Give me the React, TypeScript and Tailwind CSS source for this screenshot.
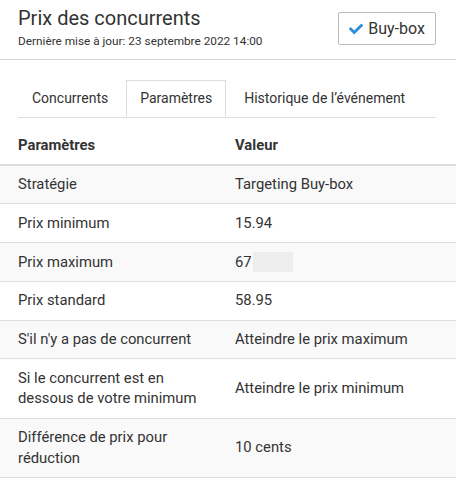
import React from 'react';
import { FaCheck } from 'react-icons/fa';

const rows: { label: string; value: string; masked?: boolean }[] = [
  { label: 'Stratégie', value: 'Targeting Buy-box' },
  { label: 'Prix minimum', value: '15.94' },
  { label: 'Prix maximum', value: '67', masked: true },
  { label: 'Prix standard', value: '58.95' },
  { label: "S'il n'y a pas de concurrent", value: 'Atteindre le prix maximum' },
  { label: 'Si le concurrent est en dessous de votre minimum', value: 'Atteindre le prix minimum' },
  { label: 'Différence de prix pour réduction', value: '10 cents' },
];

const tabs = ['Concurrents', 'Paramètres', 'Historique de l’événement'];

export default function App() {
  return (
    <div className="w-[456px] h-[479px] overflow-hidden bg-white text-[#333] font-['Roboto',sans-serif]">
      {/* header */}
      <div className="flex items-start justify-between pl-[18px] pr-[20px] pt-[6px] pb-[10px] border-b border-[#d6d6d6]">
        <div>
          <h1 className="text-[20px] leading-[24px] text-[#333]">Prix des concurrents</h1>
          <p className="mt-[3px] text-[11.8px] leading-[16px] text-[#333]">
            Dernière mise à jour: 23 septembre 2022 14:00
          </p>
        </div>
        <button className="mt-[6px] h-[33px] w-[98px] flex items-center justify-center gap-[5px] border border-[#bbb] rounded-[2px] bg-white text-[16px] text-[#333]">
          <FaCheck className="w-[14px] h-[14px] text-[#2b8fe0]" />
          Buy-box
        </button>
      </div>

      {/* tabs */}
      <div className="pl-[18px] pr-[20px] pt-[20px]">
        <div className="flex gap-[4px] border-b border-[#ddd]">
          {tabs.map((t) => (
            <div
              key={t}
              className={
                t === 'Paramètres'
                  ? 'px-[13px] h-[37px] flex items-center text-[14px] border border-[#ddd] border-b-white -mb-px bg-white'
                  : 'px-[13px] h-[37px] flex items-center text-[14px] border border-transparent'
              }
            >
              {t}
            </div>
          ))}
        </div>
      </div>

      {/* table */}
      <div className="mt-[8px] text-[14.8px] leading-[20.7px]">
        <div className="grid grid-cols-[235px_1fr] border-b-2 border-[#ddd] font-bold">
          <div className="pl-[18px] pr-[25px] py-[8.5px]">Paramètres</div>
          <div className="pr-[18px] py-[8.5px]">Valeur</div>
        </div>
        {rows.map((r, i) => (
          <div
            key={r.label}
            className={`grid grid-cols-[235px_1fr] border-b border-[#ddd] ${i % 2 === 0 ? 'bg-[#f9f9f9]' : 'bg-white'}`}
          >
            <div className="pl-[18px] pr-[25px] py-[8.5px] text-[#333]">{r.label}</div>
            <div className="pr-[18px] py-[8.5px] flex items-center text-[#333]">
              {r.value}
              {r.masked && <span className="ml-[1px] inline-block w-[40px] h-[20px] bg-[#ededed] blur-[0.5px]" />}
            </div>
          </div>
        ))}
      </div>
    </div>
  );
}
